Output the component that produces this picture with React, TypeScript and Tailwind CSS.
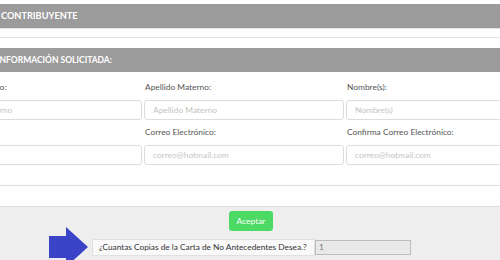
import React from "react";

const Field = ({ label, placeholder }: { label: string; placeholder: string }) => (
  <div className="flex flex-col">
    <div className="h-[25px] flex items-center pl-[1px] text-[8.4px] text-[#555]">{label}</div>
    <div className="h-[20px] border border-[#dcdcdc] rounded-[3px] bg-white flex items-center pl-[8px] text-[8.4px] text-[#c4c4c4]">
      {placeholder}
    </div>
  </div>
);

export default function App() {
  return (
    <div className="w-[500px] h-[260px] overflow-hidden bg-white" style={{ fontFamily: "Lato, 'Open Sans', sans-serif" }}>
      <div className="h-[4px]" />
      <div className="h-[24px] bg-[#9b9b9b] flex items-center pl-[1px] text-[9.2px] font-bold text-white">CONTRIBUYENTE</div>
      <div className="h-[10px] border-t border-[#e2e2e2] border-b" />
      <div className="h-[10px]" />
      <div className="h-[24px] bg-[#9b9b9b] flex items-center -ml-[3px] text-[8.5px] font-bold text-white">INFORMACIÓN SOLICITADA:</div>
      <div className="-ml-[58px] w-[700px] grid grid-cols-[200px_200px_200px] gap-x-[2px] pt-[3px]">
        <Field label="Apellido Paterno:" placeholder="Apellido Paterno" />
        <Field label="Apellido Materno:" placeholder="Apellido Materno" />
        <Field label="Nombre(s):" placeholder="Nombre(s)" />
        <Field label="RFC:" placeholder="1990.01.01" />
        <Field label="Correo Electrónico:" placeholder="correo@hotmail.com" />
        <Field label="Confirma Correo Electrónico:" placeholder="correo@hotmail.com" />
      </div>
      <div className="h-[20px]" />
      <div className="h-[22px] border-t border-b border-[#dcdcdc]" />
      <div className="h-[56px] bg-[#eeeeee] flex flex-col">
        <div className="pt-[4px] pl-[229px]">
          <div className="w-[44px] h-[20px] rounded-[3px] bg-[#4cd964] text-white text-[8.4px] flex items-center justify-center">Aceptar</div>
        </div>
        <div className="flex items-start pl-[49px] -mt-[4px]">
          <svg width="42" height="40" viewBox="0 0 42 40" className="shrink-0">
            <polygon points="0,9 17,9 17,0 39,20 17,40 17,31 0,31" fill="#3b44c9" />
          </svg>
          <div className="mt-[12px] flex items-center">
            <div className="ml-[1px] w-[223px] h-[17px] bg-[#f9f9f9] border border-[#e0e0e0] flex items-center pl-[6px] text-[8.3px] text-[#333]">
              ¿Cuantas Copias de la Carta de No Antecedentes Desea.?
            </div>
            <div className="w-[96px] h-[15px] bg-[#e9e9e9] border border-[#bdbdbd] flex items-center pl-[3px] text-[8.4px] text-[#777]">1</div>
          </div>
        </div>
      </div>
    </div>
  );
}
